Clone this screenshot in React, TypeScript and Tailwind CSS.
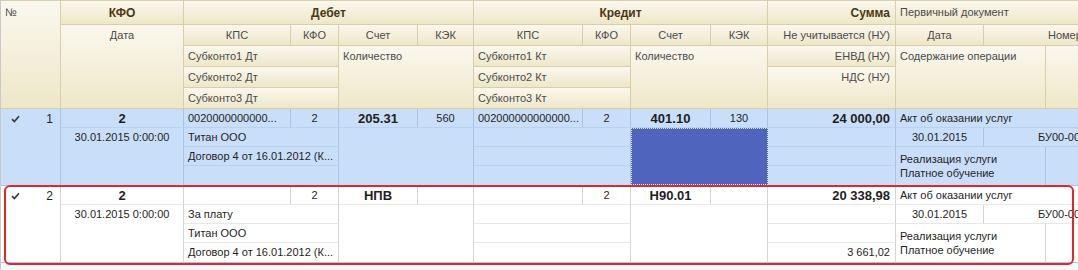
import type { ReactNode } from "react";

const COLS =
  "grid grid-cols-[60px_123px_107px_48px_79px_56px_109px_48px_80px_57px_128px_88px_62px_120px] w-[1165px]";

function H({
  className = "",
  children,
  bold = false,
  align = "center",
  top = false,
}: {
  className?: string;
  children?: ReactNode;
  bold?: boolean;
  align?: "left" | "center" | "right";
  top?: boolean;
}) {
  const justify =
    align === "left" ? "justify-start pl-[4px]" : align === "right" ? "justify-end pr-[5px]" : "justify-center";
  const text = bold ? "font-bold text-[12px] text-[#4a3812]" : "text-[11px] text-[#4b4b4b]";
  return (
    <div
      className={`border-r border-b border-[#d8cfaa] bg-gradient-to-b from-[#faf8ee] to-[#eee7c8] ${className}`}
    >
      <div className={`flex items-center whitespace-nowrap ${justify} ${text} ${top ? "h-[20px]" : "h-full"}`}>
        {children}
      </div>
    </div>
  );
}

function D({
  className = "",
  children,
  bold = false,
  align = "center",
  line = "",
}: {
  className?: string;
  children?: ReactNode;
  bold?: boolean;
  align?: "left" | "center" | "right";
  line?: string;
}) {
  const justify =
    align === "left" ? "justify-start pl-[4px]" : align === "right" ? "justify-end pr-[5px]" : "justify-center";
  const text = bold ? "font-bold text-[13px]" : "text-[11px]";
  return (
    <div className={`${line} ${className}`}>
      <div className={`flex h-[19px] items-center whitespace-nowrap text-[#1e1e1e] ${justify} ${text}`}>
        {children}
      </div>
    </div>
  );
}

function Check() {
  return (
    <svg width="9" height="8" viewBox="0 0 9 8" className="mt-[1px]">
      <path d="M1 4.2 L3.4 6.6 L8 1.2" fill="none" stroke="#3a3a3a" strokeWidth="1.7" />
    </svg>
  );
}

type RowData = {
  n: string;
  kpsDt: string;
  kfoDt: string;
  schetDt: string;
  kekDt: string;
  sub: [string, string, string];
  kpsKt: string;
  kfoKt: string;
  schetKt: string;
  kekKt: string;
  sum: string;
  nds: string;
};

function DataRow({ r, selected }: { r: RowData; selected: boolean }) {
  const bg = selected ? "bg-[#c9dff9]" : "bg-white";
  // vertical / horizontal grid lines
  const v = selected ? "border-r border-[#a9c3e4]" : "border-r border-[#d4d4d4]";
  const vh = selected
    ? "border-r border-b border-r-[#a9c3e4] border-b-[#b9d2f1]"
    : "border-r border-b border-r-[#d4d4d4] border-b-[#e8e8e8]";
  const h = selected ? "border-b border-[#b9d2f1]" : "border-b border-[#e8e8e8]";

  return (
    <div className={`${COLS} grid-rows-[19px_19px_19px_19px] ${bg} border-b border-[#b0c6e2] font-['Liberation_Sans',Arial,sans-serif]`}>
      {/* № */}
      <div className={`col-start-1 col-end-2 row-start-1 row-end-5 ${v}`}>
        <div className="flex h-[19px] items-center justify-between pl-[10px] pr-[7px] text-[12px] text-[#1e1e1e]">
          <Check />
          <span>{r.n}</span>
        </div>
      </div>

      {/* КФО / Дата */}
      <D className="col-start-2 col-end-3 row-start-1 row-end-2" line={vh} bold>
        2
      </D>
      <D className="col-start-2 col-end-3 row-start-2 row-end-5" line={v}>
        30.01.2015 0:00:00
      </D>

      {/* Дебет */}
      <D className="col-start-3 col-end-4 row-start-1 row-end-2" line={vh} align="left">
        {r.kpsDt}
      </D>
      <D className="col-start-4 col-end-5 row-start-1 row-end-2" line={vh}>
        {r.kfoDt}
      </D>
      <D className="col-start-5 col-end-6 row-start-1 row-end-2" line={vh} bold>
        {r.schetDt}
      </D>
      <D className="col-start-6 col-end-7 row-start-1 row-end-2" line={vh}>
        {r.kekDt}
      </D>
      <D className="col-start-3 col-end-5 row-start-2 row-end-3" line={vh} align="left">
        {r.sub[0]}
      </D>
      <D className="col-start-3 col-end-5 row-start-3 row-end-4" line={vh} align="left">
        {r.sub[1]}
      </D>
      <D className="col-start-3 col-end-5 row-start-4 row-end-5" line={v} align="left">
        {r.sub[2]}
      </D>
      <div className={`col-start-5 col-end-7 row-start-2 row-end-5 ${v}`} />

      {/* Кредит */}
      <D className="col-start-7 col-end-8 row-start-1 row-end-2" line={vh} align="left">
        {r.kpsKt}
      </D>
      <D className="col-start-8 col-end-9 row-start-1 row-end-2" line={vh}>
        {r.kfoKt}
      </D>
      <D className="col-start-9 col-end-10 row-start-1 row-end-2" line={vh} bold>
        {r.schetKt}
      </D>
      <D className="col-start-10 col-end-11 row-start-1 row-end-2" line={vh}>
        {r.kekKt}
      </D>
      <div className={`col-start-7 col-end-9 row-start-2 row-end-3 ${vh}`} />
      <div className={`col-start-7 col-end-9 row-start-3 row-end-4 ${vh}`} />
      <div className={`col-start-7 col-end-9 row-start-4 row-end-5 ${v}`} />
      {selected ? (
        <div className="col-start-9 col-end-11 row-start-2 row-end-5 bg-[#4f64bd] border border-dotted border-[#dfe6f7]" />
      ) : (
        <div className={`col-start-9 col-end-11 row-start-2 row-end-5 ${v}`} />
      )}

      {/* Сумма */}
      <D className="col-start-11 col-end-12 row-start-1 row-end-2" line={vh} bold align="right">
        {r.sum}
      </D>
      <D className="col-start-11 col-end-12 row-start-2 row-end-3" line={vh} align="right" />
      <D className="col-start-11 col-end-12 row-start-3 row-end-4" line={vh} align="right" />
      <D className="col-start-11 col-end-12 row-start-4 row-end-5" line={v} align="right">
        {r.nds}
      </D>

      {/* Первичный документ */}
      <D className="col-start-12 col-end-15 row-start-1 row-end-2" line={h} align="left">
        Акт об оказании услуг
      </D>
      <D className="col-start-12 col-end-13 row-start-2 row-end-3" line={vh}>
        30.01.2015
      </D>
      <div className={`col-start-13 col-end-15 row-start-2 row-end-3 ${h}`}>
        <div className="flex h-[19px] items-center pl-[54px] text-[11px] whitespace-nowrap text-[#1e1e1e]">
          БУ00-000012
        </div>
      </div>
      <div className={`col-start-12 col-end-14 row-start-3 row-end-5 ${v} flex flex-col justify-center pl-[4px] text-[11px] leading-[14px] text-[#1e1e1e]`}>
        <span>Реализация услуги</span>
        <span>Платное обучение</span>
      </div>
      <div className="col-start-14 col-end-15 row-start-3 row-end-5" />
    </div>
  );
}

const rows: RowData[] = [
  {
    n: "1",
    kpsDt: "0020000000000...",
    kfoDt: "2",
    schetDt: "205.31",
    kekDt: "560",
    sub: ["Титан ООО", "Договор 4 от 16.01.2012 (К...", ""],
    kpsKt: "002000000000000...",
    kfoKt: "2",
    schetKt: "401.10",
    kekKt: "130",
    sum: "24 000,00",
    nds: "",
  },
  {
    n: "2",
    kpsDt: "",
    kfoDt: "2",
    schetDt: "НПВ",
    kekDt: "",
    sub: ["За плату", "Титан ООО", "Договор 4 от 16.01.2012 (К..."],
    kpsKt: "",
    kfoKt: "2",
    schetKt: "Н90.01",
    kekKt: "",
    sum: "20 338,98",
    nds: "3 661,02",
  },
];

export default function App() {
  return (
    <div className="w-[1078px] h-[270px] overflow-hidden bg-[#f6f8fb] border-l border-[#c9c9c9] font-['Liberation_Sans',Arial,sans-serif]">
      {/* Header */}
      <div className={`${COLS} grid-rows-[24px_21px_21px_21px_21px] border-t border-[#d8cfaa]`}>
        <H className="col-start-1 col-end-2 row-start-1 row-end-6" align="left" top>
          <span className="mt-[2px]">№</span>
        </H>
        <H className="col-start-2 col-end-3 row-start-1 row-end-2" bold>
          КФО
        </H>
        <H className="col-start-2 col-end-3 row-start-2 row-end-6" top>
          Дата
        </H>

        <H className="col-start-3 col-end-7 row-start-1 row-end-2" bold>
          Дебет
        </H>
        <H className="col-start-3 col-end-4 row-start-2 row-end-3">КПС</H>
        <H className="col-start-4 col-end-5 row-start-2 row-end-3">КФО</H>
        <H className="col-start-5 col-end-6 row-start-2 row-end-3">Счет</H>
        <H className="col-start-6 col-end-7 row-start-2 row-end-3">КЭК</H>
        <H className="col-start-3 col-end-5 row-start-3 row-end-4" align="left">
          Субконто1 Дт
        </H>
        <H className="col-start-3 col-end-5 row-start-4 row-end-5" align="left">
          Субконто2 Дт
        </H>
        <H className="col-start-3 col-end-5 row-start-5 row-end-6" align="left">
          Субконто3 Дт
        </H>
        <H className="col-start-5 col-end-7 row-start-3 row-end-6" align="left" top>
          Количество
        </H>

        <H className="col-start-7 col-end-11 row-start-1 row-end-2" bold>
          Кредит
        </H>
        <H className="col-start-7 col-end-8 row-start-2 row-end-3">КПС</H>
        <H className="col-start-8 col-end-9 row-start-2 row-end-3">КФО</H>
        <H className="col-start-9 col-end-10 row-start-2 row-end-3">Счет</H>
        <H className="col-start-10 col-end-11 row-start-2 row-end-3">КЭК</H>
        <H className="col-start-7 col-end-9 row-start-3 row-end-4" align="left">
          Субконто1 Кт
        </H>
        <H className="col-start-7 col-end-9 row-start-4 row-end-5" align="left">
          Субконто2 Кт
        </H>
        <H className="col-start-7 col-end-9 row-start-5 row-end-6" align="left">
          Субконто3 Кт
        </H>
        <H className="col-start-9 col-end-11 row-start-3 row-end-6" align="left" top>
          Количество
        </H>

        <H className="col-start-11 col-end-12 row-start-1 row-end-2" bold align="right">
          Сумма
        </H>
        <H className="col-start-11 col-end-12 row-start-2 row-end-3" align="right">
          Не учитывается (НУ)
        </H>
        <H className="col-start-11 col-end-12 row-start-3 row-end-4" align="right">
          ЕНВД (НУ)
        </H>
        <H className="col-start-11 col-end-12 row-start-4 row-end-6" align="right" top>
          НДС (НУ)
        </H>

        <H className="col-start-12 col-end-15 row-start-1 row-end-2" align="left">
          Первичный документ
        </H>
        <H className="col-start-12 col-end-13 row-start-2 row-end-3">Дата</H>
        <div className="col-start-13 col-end-15 row-start-2 row-end-3 border-b border-[#d8cfaa] bg-gradient-to-b from-[#faf8ee] to-[#eee7c8]">
          <div className="flex h-full items-center pl-[64px] text-[11px] text-[#4b4b4b]">Номер</div>
        </div>
        <H className="col-start-12 col-end-14 row-start-3 row-end-6" align="left" top>
          Содержание операции
        </H>
        <H className="col-start-14 col-end-15 row-start-3 row-end-6" />
      </div>

      {/* Rows */}
      <DataRow r={rows[0]} selected />
      <div className="relative w-[1077px]">
        <DataRow r={rows[1]} selected={false} />
        <div className="pointer-events-none absolute left-[3px] right-[4px] top-[-1px] bottom-[-2px] rounded-[6px] border-2 border-[#e3252d]" />
      </div>
    </div>
  );
}
